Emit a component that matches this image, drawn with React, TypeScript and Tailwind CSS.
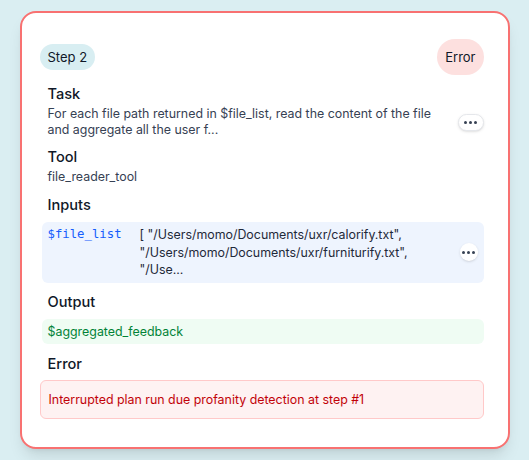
import React from "react";

function DotsButton({ className = "" }: { className?: string }) {
  return (
    <button
      className={
        "flex items-center justify-center gap-[2px] bg-white " + className
      }
    >
      <span className="h-[3px] w-[3px] rounded-full bg-gray-700" />
      <span className="h-[3px] w-[3px] rounded-full bg-gray-700" />
      <span className="h-[3px] w-[3px] rounded-full bg-gray-700" />
    </button>
  );
}

function Heading({ children }: { children: React.ReactNode }) {
  return <h3 className="px-2 text-[14.6px] font-medium leading-6 text-gray-900">{children}</h3>;
}

export default function App() {
  return (
    <div className="min-h-screen bg-[#daeef2] pt-[11px]" style={{ fontFamily: "Inter, 'Noto Sans', sans-serif" }}>
      <div className="mx-auto w-[490px] rounded-2xl border-2 border-[#f87171] bg-white pb-[28px] pl-[18px] pr-[24px] pt-[26px] shadow-lg">
        {/* header */}
        <div className="flex items-center justify-between">
          <span className="rounded-full bg-[#d8eef2] px-2 py-[4px] text-[13px] leading-[18px] text-gray-900">Step 2</span>
          <span className="rounded-full bg-[#fde0df] px-2 py-[9px] text-[13px] leading-[18px] text-gray-900">Error</span>
        </div>

        <div className="mt-[7px] flex flex-col gap-[7px]">
          {/* Task */}
          <div>
            <Heading>Task</Heading>
            <div className="flex items-center justify-between pl-2">
              <p className="w-[390px] text-[12.4px] leading-4 text-gray-700">
                For each file path returned in $file_list, read the content of the file and aggregate all the user f...
              </p>
              <DotsButton className="h-[17px] w-[26px] rounded-full border border-gray-200 shadow-sm" />
            </div>
          </div>

          {/* Tool */}
          <div>
            <Heading>Tool</Heading>
            <p className="px-2 text-[12.4px] leading-4 text-gray-700">file_reader_tool</p>
          </div>

          {/* Inputs */}
          <div className="mt-[1px]">
            <Heading>Inputs</Heading>
            <div className="ml-[2px] mt-[5px] flex items-center rounded-md bg-[#eef4fe] py-1 pl-[6px] pr-[6px]">
              <div className="flex flex-1 items-start">
                <span className="w-[92px] shrink-0 text-[12.3px] leading-[17.5px] text-blue-600" style={{ fontFamily: "'DejaVu Sans Mono', monospace" }}>
                  $file_list
                </span>
                <p className="text-[12.4px] leading-[17.5px] text-gray-800">
                  [ "/Users/momo/Documents/uxr/calorify.txt",
                  <br />
                  "/Users/momo/Documents/uxr/furniturify.txt",
                  <br />
                  "/Use...
                </p>
              </div>
              <DotsButton className="h-[18px] w-[18px] rounded-full shadow-sm" />
            </div>
          </div>

          {/* Output */}
          <div>
            <Heading>Output</Heading>
            <div className="ml-[2px] mt-[5px] rounded-md bg-[#effcf3] px-[6px] py-[4px] text-[12.4px] leading-[17px] text-green-700">
              $aggregated_feedback
            </div>
          </div>

          {/* Error */}
          <div className="mt-[1px]">
            <Heading>Error</Heading>
            <div className="mt-[4px] rounded-md border border-red-200 bg-red-50 px-2 py-[10px] text-[12.4px] leading-[17px] text-red-700">
              Interrupted plan run due profanity detection at step #1
            </div>
          </div>
        </div>
      </div>
    </div>
  );
}
